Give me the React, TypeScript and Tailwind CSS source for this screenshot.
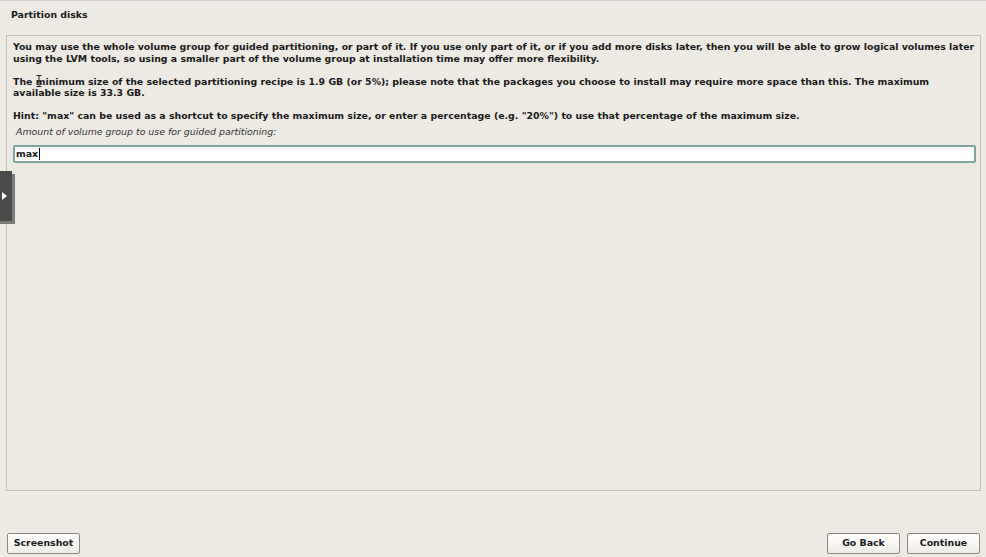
export default function App() {
  const font = { fontFamily: '"DejaVu Sans", "Liberation Sans", sans-serif' };
  const btn =
    "w-[73px] h-[21px] rounded-[2px] border border-[#8d877c] bg-gradient-to-b from-white to-[#eeece7] text-[9.4px] font-bold text-[#1a1a1a]";
  return (
    <div
      className="relative w-[986px] h-[557px] overflow-hidden bg-[#edeae4] border-t border-[#c9d1ce] flex flex-col text-[#1a1a1a]"
      style={font}
    >
      {/* Title */}
      <div className="h-[34px] pl-[11px] pt-[8px] text-[9.4px] font-bold leading-[12px]">Partition disks</div>

      {/* Main panel */}
      <div className="mx-[6px] mr-[5px] h-[456px] border border-[#c6beb2] pl-[6px] pr-[3px] pt-[5px]">
        <p className="text-[9.4px] font-bold leading-[11.5px]">
          You may use the whole volume group for guided partitioning, or part of it. If you use only part of it, or if you add more disks later, then you will be able to grow logical volumes later using the LVM tools, so using a smaller part of the volume group at installation time may offer more flexibility.
        </p>
        <p className="mt-[11.5px] text-[9.4px] font-bold leading-[11.5px]">
          The minimum size of the selected partitioning recipe is 1.9 GB (or 5%); please note that the packages you choose to install may require more space than this. The maximum available size is 33.3 GB.
        </p>
        <p className="mt-[11.5px] text-[9.4px] font-bold leading-[11.5px]">
          Hint: "max" can be used as a shortcut to specify the maximum size, or enter a percentage (e.g. "20%") to use that percentage of the maximum size.
        </p>
        <p className="mt-[4px] pl-[3px] text-[9.4px] italic leading-[11.5px] text-[#333]">
          Amount of volume group to use for guided partitioning:
        </p>
        <div className="mt-[8px] mr-[1px] h-[18px] border-2 border-[#7ea49e] rounded-[2px] bg-white flex items-center pl-[1px] text-[9.4px] font-bold">
          <span>max</span>
          <span className="ml-[1px] w-px h-[12px] bg-black" />
        </div>
      </div>

      {/* Footer buttons */}
      <div className="flex items-center justify-between pl-[7px] pr-[6px] mt-[42px]">
        <button className={btn}>Screenshot</button>
        <div className="flex gap-[7px]">
          <button className={btn}>Go Back</button>
          <button className={btn}>Continue</button>
        </div>
      </div>

      {/* Side tab overlay */}
      <div className="absolute left-0 top-[173px] w-[15px] h-[50px] bg-[#7b7a74]" />
      <div className="absolute left-0 top-[170px] w-[12px] h-[50px] bg-[#4a4a4a] flex items-center pl-[2px]">
        <svg width="6" height="8" viewBox="0 0 6 8">
          <path d="M0 0 L5 4 L0 8 Z" fill="#ffffff" />
        </svg>
      </div>

      {/* Mouse I-beam cursor */}
      <svg className="absolute left-[36px] top-[74px]" width="6" height="12" viewBox="0 0 6 12">
        <path d="M0.5 0.5 H5.5 M3 0.5 V11.5 M0.5 11.5 H5.5" stroke="#222" strokeWidth="1" fill="none" />
      </svg>
    </div>
  );
}
